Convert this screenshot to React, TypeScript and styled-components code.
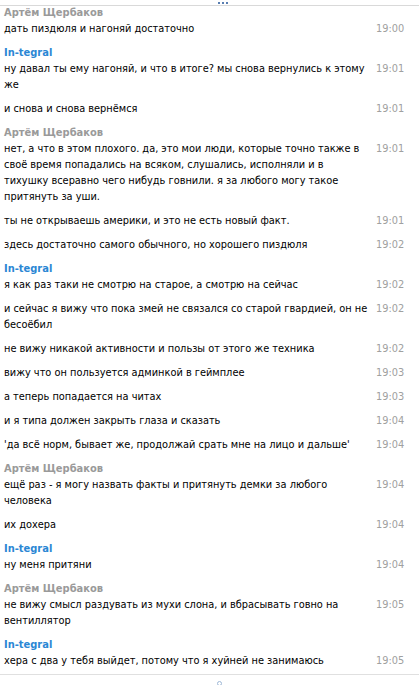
import React from 'react'
import styled, { createGlobalStyle } from 'styled-components'

type Message = { text: string; time: string }
type Group = { author: string; own: boolean; messages: Message[] }

const ARTEM = 'Артём Щербаков'
const ME = 'In-tegral'

const history: Group[] = [
  {
    author: ARTEM,
    own: false,
    messages: [{ text: 'дать пиздюля и нагоняй достаточно', time: '19:00' }],
  },
  {
    author: ME,
    own: true,
    messages: [
      { text: 'ну давал ты ему нагоняй, и что в итоге? мы снова вернулись к этому же', time: '19:01' },
      { text: 'и снова и снова вернёмся', time: '19:01' },
    ],
  },
  {
    author: ARTEM,
    own: false,
    messages: [
      {
        text: 'нет, а что в этом плохого. да, это мои люди, которые точно также в своё время попадались на всяком, слушались, исполняли и в тихушку всеравно чего нибудь говнили. я за любого могу такое притянуть за уши.',
        time: '19:01',
      },
      { text: 'ты не открываешь америки, и это не есть новый факт.', time: '19:01' },
      { text: 'здесь достаточно самого обычного, но хорошего пиздюля', time: '19:02' },
    ],
  },
  {
    author: ME,
    own: true,
    messages: [
      { text: 'я как раз таки не смотрю на старое, а смотрю на сейчас', time: '19:02' },
      { text: 'и сейчас я вижу что пока змей не связался со старой гвардией, он не бесоёбил', time: '19:02' },
      { text: 'не вижу никакой активности и пользы от этого же техника', time: '19:02' },
      { text: 'вижу что он пользуется админкой в геймплее', time: '19:03' },
      { text: 'а теперь попадается на читах', time: '19:03' },
      { text: 'и я типа должен закрыть глаза и сказать', time: '19:04' },
      { text: "'да всё норм, бывает же, продолжай срать мне на лицо и дальше'", time: '19:04' },
    ],
  },
  {
    author: ARTEM,
    own: false,
    messages: [
      { text: 'ещё раз - я могу назвать факты и притянуть демки за любого человека', time: '19:04' },
      { text: 'их дохера', time: '19:04' },
    ],
  },
  {
    author: ME,
    own: true,
    messages: [{ text: 'ну меня притяни', time: '19:04' }],
  },
  {
    author: ARTEM,
    own: false,
    messages: [{ text: 'не вижу смысл раздувать из мухи слона, и вбрасывать говно на вентиллятор', time: '19:05' }],
  },
  {
    author: ME,
    own: true,
    messages: [{ text: 'хера с два у тебя выйдет, потому что я хуйней не занимаюсь', time: '19:05' }],
  },
]

const App: React.FC = () => (
  <>
    <GlobalStyle />
    <Window>
      <TopEdge>
        <Dots>
          <Dot />
          <Dot />
          <Dot />
        </Dots>
      </TopEdge>
      <History>
        {history.map((group, i) => (
          <GroupBlock key={i}>
            <Author own={group.own}>{group.author}</Author>
            {group.messages.map((m, j) => (
              <Row key={j}>
                <Text>{m.text}</Text>
                <Time>{m.time}</Time>
              </Row>
            ))}
          </GroupBlock>
        ))}
      </History>
      <BottomEdge>
        <Ring />
      </BottomEdge>
    </Window>
  </>
)

const GlobalStyle = createGlobalStyle`
  html, body {
    margin: 0;
    padding: 0;
    background: #fff;
  }
  body {
    font-family: "DejaVu Sans Condensed", "DejaVu Sans", sans-serif;
    font-stretch: condensed;
    font-size: 10.9px;
    color: #000;
  }
`

const Window = styled.div`
  position: relative;
  width: 419px;
  height: 685px;
  overflow: hidden;
  display: flex;
  flex-direction: column;
`

const TopEdge = styled.div`
  position: absolute;
  top: 0;
  left: 0;
  right: 0;
  height: 5px;
  border-bottom: 1px solid #d9d9d9;
  background: #fff;
  display: flex;
  justify-content: center;
  align-items: flex-end;
  padding-left: 26px;
`

const Dots = styled.div`
  display: flex;
  gap: 2px;
  padding-bottom: 1px;
`

const Dot = styled.span`
  width: 2px;
  height: 2px;
  background: #5a7fb2;
`

const History = styled.div`
  flex: 1;
  padding: 1px 17px 0 4px;
`

const GroupBlock = styled.div`
  padding-top: 6px;
`

const Author = styled.div<{ own: boolean }>`
  font-weight: bold;
  font-size: 11px;
  line-height: 12px;
  margin-bottom: -2px;
  color: ${p => (p.own ? '#2b87d4' : '#9a9a9a')};
`

const Row = styled.div`
  display: grid;
  grid-template-columns: 1fr 26px;
  column-gap: 7px;
  padding: 4px 0;
  line-height: 16px;
`

const Text = styled.div`
  word-wrap: break-word;
`

const Time = styled.div`
  color: #a0a0a0;
  text-align: right;
`

const BottomEdge = styled.div`
  height: 11px;
  border-top: 1px solid #e0e0e0;
  display: flex;
  justify-content: center;
  padding-left: 20px;
  padding-top: 6px;
  box-sizing: border-box;
`

const Ring = styled.span`
  width: 3px;
  height: 3px;
  border: 1px solid #9fb8d6;
  border-radius: 50%;
`

export default App
